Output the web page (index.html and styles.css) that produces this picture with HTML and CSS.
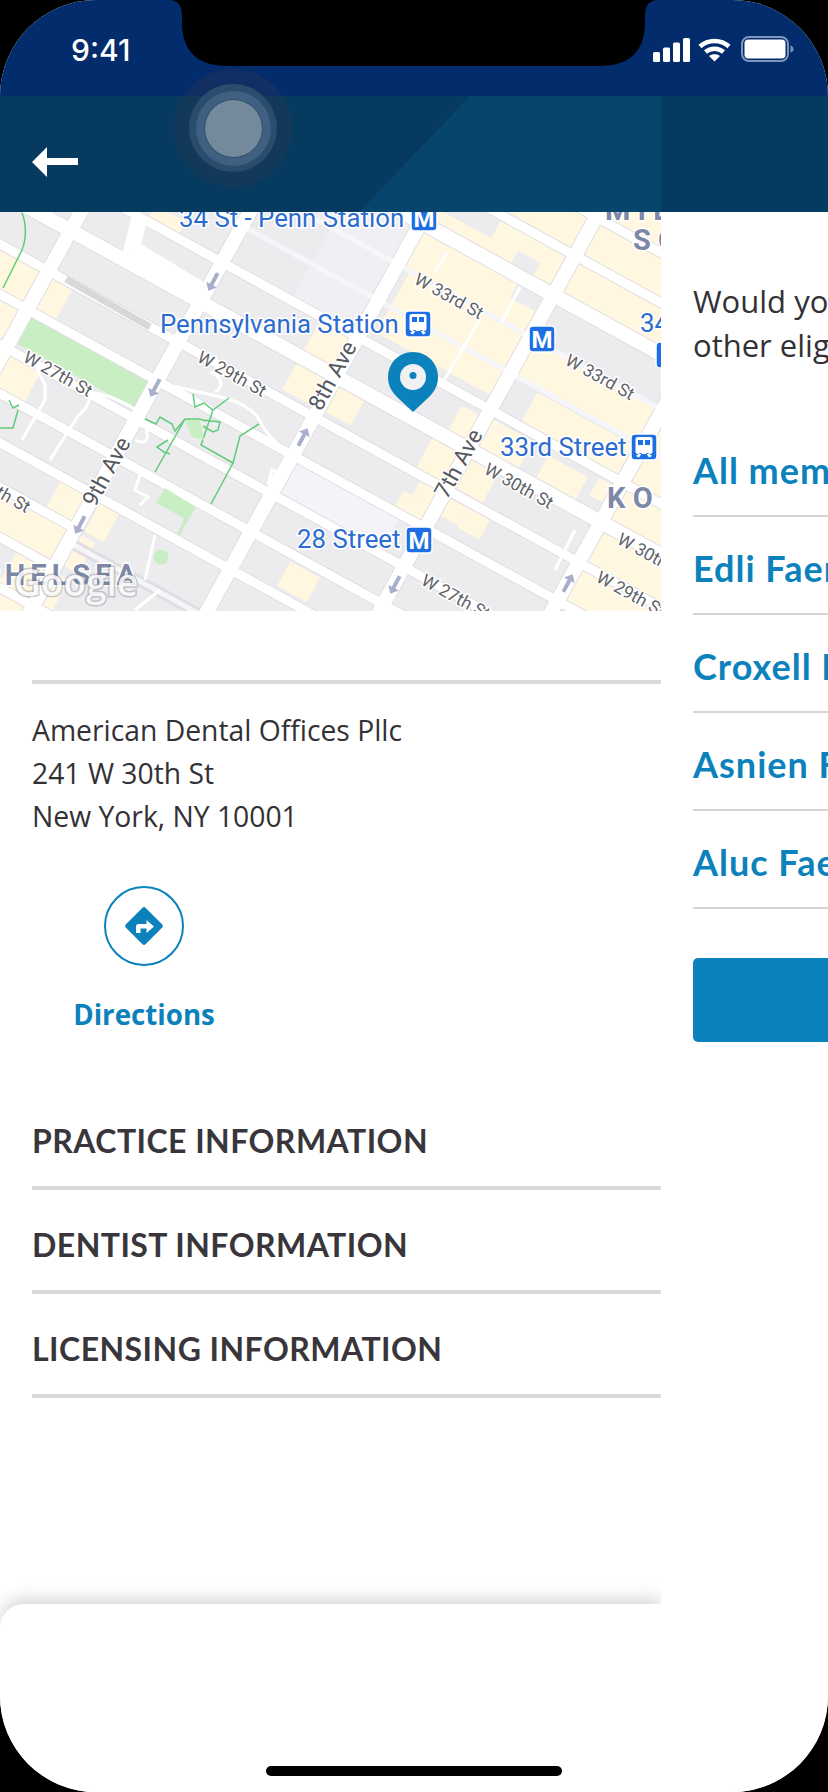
FILE: index.html
```html
<!DOCTYPE html>
<html lang="en">
<head>
<meta charset="utf-8">
<title>Practice details</title>
<link rel="stylesheet" href="styles.css">
</head>
<body>
<div class="phone">
  <header class="top">
    <div class="status">
      <span class="time">9:41</span>
      <div class="status-icons">
        <svg class="signal" width="38" height="24" viewBox="0 0 38 24"><rect x="0" y="14" width="7" height="10" rx="1.5"/><rect x="10" y="9.5" width="7" height="14.500" rx="1.500"/><rect x="20" y="4.500" width="7" height="19.500" rx="1.500"/><rect x="30" y="0" width="7" height="24" rx="1.500"/></svg>
        <svg class="wifi" width="33" height="24" viewBox="0 0 33 24"><path class="wifi-arc" d="M2 8.500C10 1 23 1 31 8.500"/><path class="wifi-arc" d="M7.500 14C12.500 9.500 20.500 9.500 25.500 14"/><path class="wifi-dot" d="M16.500 23.500L11 18C14 15.500 19 15.500 22 18Z"/></svg>
        <svg class="battery" width="53" height="26" viewBox="0 0 53 26"><rect class="battery-shell" x="1" y="1" width="46" height="24" rx="7"/><rect class="battery-fill" x="3.500" y="3.500" width="41" height="19" rx="4"/><path class="battery-nub" d="M49.500 9.500C51.500 10 52.500 11.500 52.500 13C52.500 14.500 51.500 16 49.500 16.500Z"/></svg>
      </div>
    </div>
    <div class="appbar">
      <div class="appbar-main">
        <div class="appbar-facet"></div>
        <svg class="back" width="46" height="30" viewBox="0 0 46 30"><polygon points="0,15 15,0 15,11 46,11 46,18 15,18 15,30"/></svg>
      </div>
      <div class="appbar-side"></div>
    </div>
  </header>

  <main class="panes">
    <section class="detail">
      <svg class="map" width="661" height="399" viewBox="0 212 661 399">
        <rect class="m-ground" x="0" y="212" width="661" height="399"/>
        <g transform="rotate(28.8)">
          <g class="m-yellow">
            <rect x="476" y="-180" width="144" height="127"/>
            <rect x="545" y="-53" width="75" height="45"/>
            <rect x="476" y="-28" width="70" height="20"/>
            <rect x="476" y="-3" width="151" height="43"/>
            <rect x="490" y="40" width="137" height="70"/>
            <rect x="627" y="-180" width="151" height="172"/>
            <rect x="627" y="40" width="151" height="40"/>
            <rect x="660" y="85" width="110" height="33"/>
            <rect x="785" y="-180" width="120" height="172"/>
            <rect x="785" y="40" width="120" height="218"/>
            <rect x="600" y="133" width="27" height="30"/>
            <rect x="632" y="130" width="48" height="32"/>
            <rect x="700" y="135" width="45" height="28"/>
            <rect x="755" y="130" width="17" height="20"/>
            <rect x="590" y="172" width="37" height="38"/>
            <rect x="632" y="172" width="33" height="36"/>
            <rect x="590" y="235" width="37" height="19"/>
            <rect x="600" y="219" width="20" height="16"/>
            <rect x="633" y="220" width="22" height="20"/>
            <rect x="655" y="220" width="25" height="22"/>
            <rect x="435" y="125" width="41" height="80"/>
            <rect x="482" y="172" width="30" height="32"/>
            <rect x="90" y="218" width="83" height="36"/>
            <rect x="90" y="262" width="83" height="40"/>
            <rect x="173" y="218" width="30" height="35"/>
            <rect x="173" y="306" width="42" height="35"/>
            <rect x="285" y="393" width="30" height="32"/>
            <rect x="330" y="393" width="22" height="32"/>
            <rect x="215" y="432" width="100" height="36"/>
            <rect x="328" y="430" width="17" height="35"/>
            <rect x="280" y="475" width="60" height="60"/>
            <rect x="235" y="105" width="35" height="18"/>
            <rect x="525" y="352" width="34" height="28"/>
          </g>
          <g class="m-block">
            <rect x="575" y="-30" width="25" height="18"/>
            <rect x="590" y="-3" width="30" height="18"/>
          </g>
          <rect class="m-pale" x="484" y="262" width="116" height="36"/>
          <rect class="m-pale" x="400" y="-10" width="70" height="130" opacity=".5"/>
          <rect class="m-green" x="178" y="263" width="137" height="30"/>
          <path class="m-case" d="M90-140H905M90-97H905M90-53H905M90 123H905M90 214H905M90 258H905M90 302H905M90 345H905M90 388H905M90 427H324M90 471H324M324 442H905M90 515H905M90 560H905"/>
          <path class="m-case-wide" d="M90-8H905M90 168H905M173-180V600M321-180V600M476-180V600M627-180V600M778-180V600"/>
          <path class="m-road" d="M90-140H905M90-97H905M90-53H905M90 123H905M90 214H905M90 258H905M90 302H905M90 345H905M90 388H905M90 427H324M90 471H324M90 515H905M90 560H905"/>
          <path class="m-road-thin" d="M324 442H905M90 40H905M90 81H905"/>
          <path class="m-road-wide" d="M90-8H905M90 168H905M173-180V600M321-180V600M476-180V600M627-180V600M778-180V600"/>
        </g>
        <path class="m-rail" d="M66 279L150 327"/>
        <path class="m-plaza" d="M140 216L132 248L205 292"/>
        <path class="m-lane" d="M210 372C225 378 222 388 215 392M85 388C93 396 90 405 78 416L50 460M35 365L45 385V400L22 440M90 392C110 395 130 405 135 410M170 385C200 395 250 395 262 425C270 440 285 450 290 455M146 430C150 440 145 445 135 440M140 475L135 490L148 497L140 505M155 535L145 580M160 590L135 610M270 480C275 475 280 472 272 470L268 485M555 570L575 530M447 252L435 272M520 287L502 322M480 319L443 382"/>
        <g class="m-path">
          <path d="M22 213C27 225 26 240 22 250L3 288"/>
          <path d="M0 428H13L18 410M9 400L13 408L19 405"/>
          <path d="M145 419L156 424L160 417L172 424L175 431L185 419H200L206 421M193 394L195 407L204 403L213 410L229 398M213 410L201 445L233 463L240 436L259 424M233 463L211 504M185 419L155 472M168 440L157 447L164 452L170 454M203 420L220 422L218 430L213 432L203 426"/>
        </g>
        <path class="m-green" d="M185 420L200 420L204 440L192 437Z"/>
        <path class="m-green" d="M165 488L196 507L185 525L180 535L177 535L184 518L156 503Z"/>
        <circle class="m-green" cx="161" cy="557" r="7.500"/>

        <g class="m-arrow">
          <path transform="translate(213 282) rotate(118)" d="M-10-2H3V-6L10 0L3 6V2H-10Z"/>
          <path transform="translate(155 388) rotate(118)" d="M-10-2H3V-6L10 0L3 6V2H-10Z"/>
          <path transform="translate(80 525) rotate(118)" d="M-10-2H3V-6L10 0L3 6V2H-10Z"/>
          <path transform="translate(303 437) rotate(-62)" d="M-10-2H3V-6L10 0L3 6V2H-10Z"/>
          <path transform="translate(395 585) rotate(118)" d="M-10-2H3V-6L10 0L3 6V2H-10Z"/>
          <path transform="translate(568 583) rotate(-62)" d="M-10-2H3V-6L10 0L3 6V2H-10Z"/>
        </g>

        <g class="m-area">
          <text x="605" y="220">M I D</text>
          <text x="633" y="250">S O</text>
          <text x="607" y="508">K O</text>
          <text class="m-area-end" x="141" y="585">CHELSEA</text>
        </g>

        <g class="m-street">
          <text transform="translate(413 283) rotate(28.800)">W 33rd St</text>
          <text transform="translate(564 364) rotate(28.800)">W 33rd St</text>
          <text transform="translate(483 473) rotate(28.800)">W 30th St</text>
          <text transform="translate(616 543) rotate(28.800)">W 30th St</text>
          <text transform="translate(595 581) rotate(28.800)">W 29th St</text>
          <text transform="translate(420 584) rotate(28.800)">W 27th St</text>
          <text transform="translate(196 361) rotate(28.800)">W 29th St</text>
          <text transform="translate(22 361) rotate(28.800)">W 27th St</text>
          <text transform="translate(-40 477) rotate(28.800)">W 28th St</text>
        </g>
        <g class="m-ave">
          <text transform="translate(95 508) rotate(-61)">9th Ave</text>
          <text transform="translate(321 412) rotate(-61)">8th Ave</text>
          <text transform="translate(447 500) rotate(-61)">7th Ave</text>
        </g>

        <g class="m-transit">
          <text x="179" y="227">34 St - Penn Station</text>
          <text x="160" y="333">Pennsylvania Station</text>
          <text x="500" y="456">33rd Street</text>
          <text x="297" y="548">28 Street</text>
          <text x="640" y="332">34</text>
        </g>

        <g class="m-badge">
          <rect x="411" y="205" width="26" height="26" rx="4"/>
          <rect x="529" y="326" width="26" height="26" rx="4"/>
          <rect x="406" y="527" width="26" height="26" rx="4"/>
          <rect x="656" y="342" width="26" height="26" rx="4"/>
          <rect x="405" y="311" width="26" height="26" rx="4"/>
          <rect x="631" y="434" width="26" height="26" rx="4"/>
        </g>
        <g class="m-badge-m">
          <text x="424" y="226.500">M</text>
          <text x="542" y="347.500">M</text>
          <text x="419" y="548.500">M</text>
        </g>
        <g class="m-train">
          <path d="M409.500 316Q409.500 314 412 314H424Q426.500 314 426.500 316V329Q426.500 331 424 331H412Q409.500 331 409.500 329ZM412 317V322H417V317ZM419 317V322H424V317ZM410 333L414 330H416L413 334.500ZM426 333L422 330H420L423 334.500Z"/>
          <path d="M635.500 439Q635.500 437 638 437H650Q652.500 437 652.500 439V452Q652.500 454 650 454H638Q635.500 454 635.500 452ZM638 440V445H643V440ZM645 440V445H650V440ZM636 456L640 453H642L639 457.500ZM652 456L648 453H646L649 457.500Z"/>
        </g>

        <text class="m-google" x="14" y="596">Google</text>

        <path class="m-pin" d="M413 352C399 352 388 363 388 377C388 386 392 392 397 397L413 412L429 397C434 392 438 386 438 377C438 363 427 352 413 352Z"/>
        <circle class="m-pin-hole" cx="413" cy="377" r="13"/>
        <circle class="m-pin-dot" cx="413" cy="375.500" r="3.500"/>
      </svg>

      <div class="rule"></div>
      <address class="addr">
        <div>American Dental Offices Pllc</div>
        <div>241 W 30th St</div>
        <div>New York, NY 10001</div>
      </address>
      <div class="action">
        <span class="action-ring">
          <svg width="42" height="42" viewBox="0 0 42 42"><rect class="dir-sign" x="7" y="7" width="28" height="28" rx="2.500" transform="rotate(45 21 21)"/><path class="dir-arrow" d="M13 28V21.500Q13 19 15.500 19H23.500V15L31 21.500L23.500 28V23.500H17.500V28Z"/></svg>
        </span>
        <span class="action-label">Directions</span>
      </div>
      <ul class="info">
        <li>PRACTICE INFORMATION</li>
        <li>DENTIST INFORMATION</li>
        <li>LICENSING INFORMATION</li>
      </ul>
    </section>
    <aside class="sheet">
      <p class="sheet-text">Would you like to schedule for<br>other eligible members?</p>
      <ul class="members">
        <li>All members</li>
        <li>Edli Faenza</li>
        <li>Croxell Faenza</li>
        <li>Asnien Faenza</li>
        <li>Aluc Faenza</li>
      </ul>
      <div class="sheet-btn"></div>
    </aside>
  </main>

  <div class="tray"></div>
  <div class="home"></div>
</div>

<svg class="notch" width="489" height="66" viewBox="0 0 489 66"><path d="M0 0Q13 0 13 16V22Q13 66 59 66H430Q476 66 476 22V16Q476 0 489 0Z"/></svg>
<div class="touch"><div class="touch-mid"><div class="touch-in"><div class="touch-core"></div></div></div></div>
</body>
</html>
```

FILE: styles.css
```css
* { box-sizing: border-box; }
html, body { margin: 0; padding: 0; background: #000; }
body { width: 828px; height: 1792px; position: relative; overflow: hidden; font-family: "Open Sans", sans-serif; color: #333136; }
ul { list-style: none; margin: 0; padding: 0; }

.phone { width: 828px; height: 1792px; border-radius: 96px; overflow: hidden; background: #fff; display: flex; flex-direction: column; position: relative; }

.top { flex: none; }
.status { height: 96px; background: #032c6c; display: flex; justify-content: space-between; align-items: flex-start; padding: 32px 34px 0 71px; }
.time { font-family: Inter, sans-serif; font-size: 30px; line-height: 36px; font-weight: 500; color: #fff; }
.status-icons { display: flex; align-items: flex-start; gap: 10px; margin-top: 4px; }
.signal { fill: #fff; margin-top: 2px; margin-right: -3px; }
.wifi { margin-top: 2px; }
.wifi-arc { fill: none; stroke: #fff; stroke-width: 4.500px; }
.wifi-dot { fill: #fff; }
.battery-shell { fill: none; stroke: #7f96bd; stroke-width: 2px; }
.battery-fill { fill: #fff; }
.battery-nub { fill: #7f96bd; }

.appbar { height: 116px; display: flex; }
.appbar-main { width: 661px; background: #063a5f; position: relative; display: flex; align-items: center; padding: 16px 0 0 32px; overflow: hidden; }
.appbar-facet { position: absolute; inset: 0; background: #07456d; clip-path: polygon(470px 0, 661px 0, 661px 116px, 359px 116px); }
.back { fill: #fff; position: relative; }
.appbar-side { flex: 1; background: #053b60; }

.panes { flex: 1; display: flex; min-height: 0; }
.detail { width: 661px; flex: none; }
.map { display: block; }
.m-ground { fill: #ecebee; }
.m-block { fill: #ecebee; }
.m-yellow { fill: #fff7e0; }
.m-pale { fill: #f4f4f8; }
.m-green { fill: #c9eec4; }
.m-case { fill: none; stroke: #dfdfe3; stroke-width: 11px; }
.m-case-wide { fill: none; stroke: #dfdfe3; stroke-width: 16px; }
.m-road { fill: none; stroke: #fff; stroke-width: 9px; }
.m-road-thin { fill: none; stroke: #f6f6fa; stroke-width: 5px; }
.m-road-wide { fill: none; stroke: #fff; stroke-width: 14px; }
.m-plaza { fill: none; stroke: #fff; stroke-width: 16px; }
.m-rail { fill: none; stroke: #d8d8db; stroke-width: 7px; }
.m-lane { fill: none; stroke: #fff; stroke-width: 3px; }
.m-path { fill: none; stroke: #5fcb78; stroke-width: 1.500px; }
.m-arrow { fill: #a9aecd; }
.m-area text { font-family: Roboto, sans-serif; font-weight: 700; font-size: 29px; fill: #7d88a6; stroke: #fff; stroke-width: 3px; paint-order: stroke; }
.m-area .m-area-end { text-anchor: end; letter-spacing: 5px; }
.m-street text { font-family: Roboto, sans-serif; font-size: 17.500px; fill: #5f6368; stroke: #fff; stroke-width: 3px; paint-order: stroke; }
.m-ave text { font-family: Roboto, sans-serif; font-size: 22.500px; fill: #55585e; stroke: #fff; stroke-width: 3px; paint-order: stroke; }
.m-transit text { font-family: Roboto, sans-serif; font-size: 25.800px; fill: #2b6cd1; stroke: #fff; stroke-width: 3px; paint-order: stroke; }
.m-badge rect { fill: #1d6fe3; stroke: #fff; stroke-width: 1.500px; }
.m-badge-m text { font-family: Roboto, sans-serif; font-weight: 700; font-size: 24px; fill: #fff; text-anchor: middle; }
.m-train { fill: #fff; fill-rule: evenodd; }
.m-google { font-family: "Open Sans", sans-serif; font-weight: 600; font-size: 37px; fill: #fff; fill-opacity: .85; stroke: #70707a; stroke-opacity: .35; stroke-width: 3px; paint-order: stroke; }
.m-pin { fill: #0b82bb; }
.m-pin-hole { fill: #f1f1f3; }
.m-pin-dot { fill: #0b82bb; }

.rule { height: 4px; margin: 69px 0 0 32px; background: #d9d9d6; }
.addr { font-style: normal; font-size: 28.300px; line-height: 43px; margin: 25px 0 0 32px; color: #333136; }
.action { width: 224px; margin: 48px 0 0 32px; display: flex; flex-direction: column; align-items: center; }
.action-ring { width: 80px; height: 80px; border: 2px solid #0b82bb; border-radius: 50%; display: flex; align-items: center; justify-content: center; }
.action-label { font-size: 27.700px; line-height: 36px; font-weight: 700; color: #0b82bb; margin-top: 30px; }
.dir-sign { fill: #0b82bb; }
.dir-arrow { fill: #fff; }

.info { margin: 54px 0 0 32px; }
.info li { height: 104px; border-bottom: 4px solid #d9d9d6; padding-top: 36px; font-family: Lato, sans-serif; font-weight: 700; font-size: 32px; letter-spacing: .45px; line-height: 38px; color: #38363b; white-space: nowrap; }

.sheet { flex: 1; min-width: 0; overflow: hidden; padding: 67px 0 0 32px; background: #fff; }
.sheet-text { margin: 0; font-size: 31px; line-height: 44px; white-space: nowrap; color: #333136; }
.members { margin-top: 52px; }
.members li { height: 98px; border-bottom: 2px solid #d6d6d8; padding-top: 31px; font-family: Lato, sans-serif; font-weight: 700; font-size: 36px; letter-spacing: 1px; line-height: 40px; color: #0b82bb; white-space: nowrap; }
.sheet-btn { width: 400px; height: 84px; margin-top: 49px; background: #0b82bb; border-radius: 5px; }

.tray { position: absolute; left: 0; top: 1604px; width: 661px; height: 188px; background: #fff; border-radius: 24px 0 0 0; box-shadow: 0 -6px 16px rgba(60, 60, 80, .2); clip-path: inset(-30px 0 0 0); }
.home { position: absolute; left: 266px; top: 1766px; width: 296px; height: 10px; border-radius: 5px; background: #000; }

.notch { position: absolute; left: 169px; top: 0; fill: #000; }
.touch { position: absolute; left: 174px; top: 69px; width: 118px; height: 118px; border-radius: 50%; background: rgba(48, 57, 82, .32); display: flex; align-items: center; justify-content: center; }
.touch-mid { width: 88px; height: 88px; border-radius: 50%; background: #2a4c6d; display: flex; align-items: center; justify-content: center; }
.touch-in { width: 75px; height: 75px; border-radius: 50%; background: #3f6080; display: flex; align-items: center; justify-content: center; }
.touch-core { width: 59px; height: 59px; border-radius: 50%; background: #74899c; border: 1px solid #2c4c68; }
```
